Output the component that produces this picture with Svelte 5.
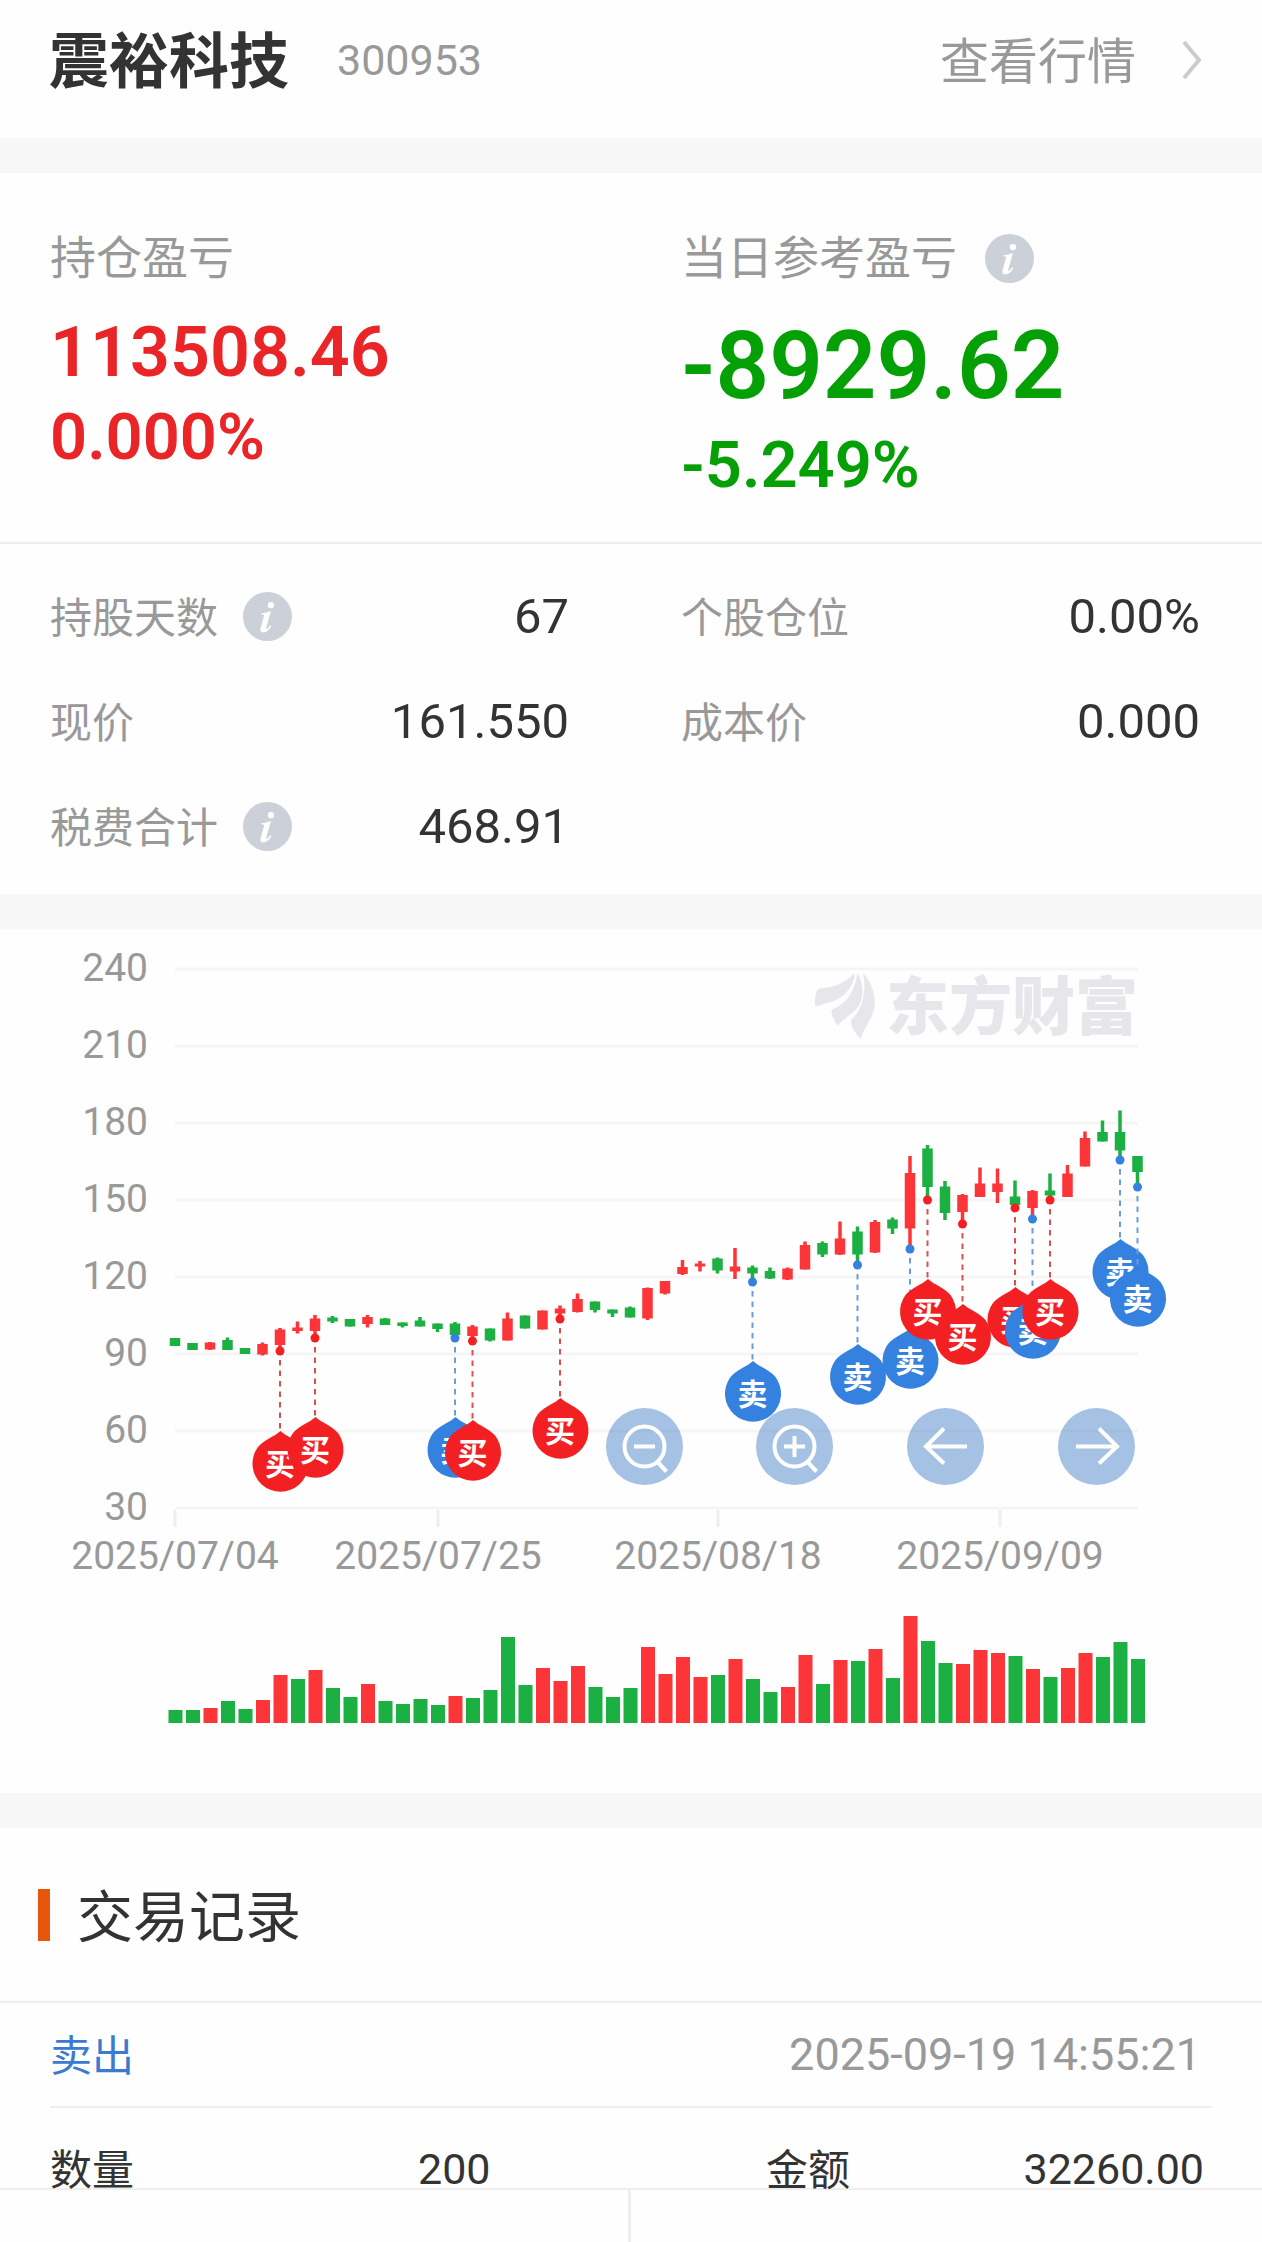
<script>
  // Chart units: the plot spans 240 (top) to 30 (bottom) on the price axis.
  const TOP = 969;
  const STEP = 77;
  const FIRST = 175;
  const PITCH = 17.5;
  const VOLUME_BASE = 1723;

  const prices = [240, 210, 180, 150, 120, 90, 60, 30];
  const dates = [
    { x: 175, label: '2025/07/04' },
    { x: 438, label: '2025/07/25' },
    { x: 718, label: '2025/08/18' },
    { x: 1000, label: '2025/09/09' }
  ];

  // [direction, high, body top, body bottom, low]
  const candles = [
    ['g', 1338, 1338, 1346, 1346], ['g', 1343, 1343, 1350, 1350], ['r', 1342, 1342.5, 1349.5, 1350],
    ['g', 1337.5, 1340, 1350, 1350], ['g', 1348, 1348, 1354, 1354], ['r', 1342.5, 1344, 1354.5, 1355.5],
    ['r', 1328, 1329.5, 1345, 1349], ['r', 1321.5, 1327.5, 1331, 1333.5], ['r', 1315, 1318.5, 1331, 1335],
    ['g', 1316, 1317.5, 1321.5, 1323], ['g', 1319, 1319, 1326.5, 1326.5], ['r', 1315, 1317, 1324, 1327.5],
    ['g', 1318, 1318.5, 1325, 1325], ['g', 1322.5, 1322.5, 1326, 1327.5], ['g', 1317, 1320.5, 1326.5, 1326.5],
    ['g', 1323.5, 1323.5, 1329, 1332], ['g', 1322, 1323.5, 1335, 1338], ['r', 1325, 1326.5, 1336, 1339],
    ['g', 1328.5, 1328.5, 1340.5, 1341.5], ['r', 1312.5, 1318.5, 1340.5, 1340.5], ['g', 1315.5, 1315.5, 1328.5, 1328.5],
    ['r', 1310.5, 1310.5, 1329.5, 1329.5], ['r', 1305.5, 1308.5, 1313.5, 1318], ['r', 1293.5, 1299, 1312, 1312.5],
    ['g', 1301.5, 1301.5, 1310, 1312.5], ['g', 1309.5, 1309.5, 1313.5, 1317], ['g', 1306.5, 1307.5, 1317.5, 1317.5],
    ['r', 1287.5, 1288, 1318.5, 1320], ['r', 1281, 1281, 1293.5, 1294.5], ['r', 1260, 1267, 1274, 1275],
    ['r', 1261, 1263.5, 1266.5, 1271.5], ['g', 1257.5, 1258.5, 1270.5, 1273.5], ['r', 1248, 1266.5, 1271.5, 1279],
    ['g', 1265.5, 1267.5, 1273.5, 1279], ['g', 1267.5, 1271, 1278.5, 1279], ['r', 1267.5, 1268.5, 1279.5, 1280],
    ['r', 1241.5, 1245, 1269.5, 1269.5], ['g', 1241.5, 1243, 1254.5, 1257], ['r', 1221.5, 1238.5, 1254.5, 1255],
    ['g', 1226.5, 1231.5, 1254.5, 1262], ['r', 1220, 1222, 1252.5, 1253], ['g', 1217.5, 1219.5, 1228.5, 1234],
    ['r', 1156, 1173, 1228.5, 1246], ['g', 1145, 1148.5, 1187, 1196], ['g', 1181, 1186.5, 1213, 1220],
    ['r', 1194, 1195, 1212, 1220], ['r', 1167.5, 1183.5, 1197, 1197], ['r', 1168.5, 1183.5, 1192, 1203],
    ['g', 1180.5, 1196.5, 1205, 1206], ['r', 1190, 1191, 1208, 1216], ['g', 1173.5, 1190.5, 1195.5, 1197],
    ['r', 1165, 1173.5, 1197, 1197], ['r', 1131.5, 1138, 1166.5, 1166.5], ['g', 1120.5, 1132, 1141.5, 1141.5],
    ['g', 1110.5, 1132, 1150.5, 1156], ['g', 1156, 1156, 1172, 1183]
  ];

  // Trades: candle index, side, y of the price dot, y of the balloon's centre
  const trades = [
    { i: 6, side: 'buy', dot: 1351, y: 1462 },
    { i: 8, side: 'buy', dot: 1338, y: 1448 },
    { i: 16, side: 'sell', dot: 1338, y: 1448 },
    { i: 17, side: 'buy', dot: 1341, y: 1451 },
    { i: 22, side: 'buy', dot: 1319, y: 1429 },
    { i: 33, side: 'sell', dot: 1282, y: 1392 },
    { i: 39, side: 'sell', dot: 1265, y: 1375 },
    { i: 42, side: 'sell', dot: 1249, y: 1359 },
    { i: 43, side: 'buy', dot: 1200, y: 1310 },
    { i: 45, side: 'buy', dot: 1224, y: 1335 },
    { i: 48, side: 'buy', dot: 1208, y: 1318 },
    { i: 49, side: 'sell', dot: 1219, y: 1329 },
    { i: 50, side: 'buy', dot: 1200, y: 1310 },
    { i: 54, side: 'sell', dot: 1160, y: 1270 },
    { i: 55, side: 'sell', dot: 1187, y: 1297 }
  ];

  const volumes = [
    13, 13, 15, 22, 14, 23, 48, 44, 53, 35, 26, 39, 22, 19, 24, 18, 27, 25, 33, 86, 38, 55, 42, 57, 36, 26, 35, 76,
    49, 66, 46, 48, 64, 44, 31, 36, 68, 39, 63, 62, 74, 45, 107, 82, 60, 59, 73, 70, 67, 54, 46, 55, 70, 66, 81, 64
  ];
  const volumeSides = 'ggrggrrgrggrggggrggggrrrgggrrrrgrggrrgrgrgrggrrrgrgrrggg';

  const x = (i) => FIRST + i * PITCH;
</script>

{#snippet info(name)}
  <button class="info" aria-label={name}>
    <svg viewBox="0 0 50 50" aria-hidden="true">
      <circle cx="25" cy="25" r="25" fill="#ccd0d8" />
      <circle cx="28.500" cy="13.500" r="3.200" fill="#fff" />
      <path d="M19 21.500c3-.2 6-1 9.500-2.200l-4.800 17.200c-.3 1.300.3 1.500 1.200.8 1.200-.9 2.100-2 3-3.300l1.100.7c-2.300 4-5 6.600-8.200 6.600-2.600 0-3.600-1.700-2.900-4.300l3.500-12.400c.3-1.200-.1-1.600-1.300-1.700l-1.300-.1z" fill="#fff" />
    </svg>
  </button>
{/snippet}

<main>
  <header>
    <h1>震裕科技</h1>
    <span class="code">300953</span>
    <a class="quote" href="#quote">
      <span>查看行情</span>
      <svg viewBox="0 0 20 40" aria-hidden="true">
        <path d="M2 2 17 20 2 38" fill="none" stroke="#ccc" stroke-width="4" />
      </svg>
    </a>
  </header>

  <section class="profit split">
    <div class="hold">
      <h2>持仓盈亏</h2>
      <p class="amount">113508.46</p>
      <p class="rate">0.000%</p>
    </div>
    <div class="day">
      <h2>当日参考盈亏 {@render info('当日参考盈亏说明')}</h2>
      <p class="amount">-8929.62</p>
      <p class="rate">-5.249%</p>
    </div>
  </section>

  <dl class="facts split">
    <div><dt><span>持股天数</span> {@render info('持股天数说明')}</dt><dd>67</dd></div>
    <div><dt><span>个股仓位</span></dt><dd>0.00%</dd></div>
    <div><dt><span>现价</span></dt><dd>161.550</dd></div>
    <div><dt><span>成本价</span></dt><dd>0.000</dd></div>
    <div><dt><span>税费合计</span> {@render info('税费合计说明')}</dt><dd>468.91</dd></div>
  </dl>

  <section class="chart" aria-label="K线图">
    <svg class="plot" viewBox="0 929 1262 864">
      {#each prices as price, n}
        <line x1="175" x2="1138" y1={TOP + n * STEP} y2={TOP + n * STEP} stroke="#f5f5f5" stroke-width="3" />
        <text class="axis" x="148" y={TOP + n * STEP + 12} text-anchor="end">{price}</text>
      {/each}
      {#each dates as d}
        <line x1={d.x} x2={d.x} y1="1510" y2="1527" stroke="#eee" stroke-width="3" />
        <text class="axis" x={d.x} y="1569" text-anchor="middle">{d.label}</text>
      {/each}

      <g fill="#e7e6eb">
        <path d="M815.500 1007C814 998 816 989 820 988.500C832 988 846 983 854.500 973C855 984 846 996 834 1001C827 1003.500 821 1004 815.500 1007Z" />
        <path d="M837.500 1025.500C834 1020 831 1015 831.500 1010C848 1003 855 990 857.500 972.500C863 983 865 996 858 1007C853 1014 845 1017 837.500 1025.500Z" />
        <path d="M860.500 1038.500C855 1033 851 1027 851 1020C862 1011 867 992 863 973C871 981 876 995 874.500 1007C872 1020 864 1028 860.500 1038.500Z" />
        <text class="brand" x="886" y="1029">东方财富</text>
      </g>

      {#each candles as [side, high, top, bottom, low], i}
        <g class={side === 'r' ? 'up' : 'down'}>
          <rect x={x(i) - 1.75} y={high} width="3.5" height={low - high} />
          <rect x={x(i) - 5.25} y={top} width="10.5" height={bottom - top} />
        </g>
      {/each}

      {#each trades as t}
        <g class={t.side} transform="translate({x(t.i)} {t.y})">
          <line x1="0" x2="0" y1={t.dot - t.y + 9} y2="-30" stroke-width="2" stroke-dasharray="5.500 5" />
          <circle cy={t.dot - t.y} r="4.500" />
          <path d="M.5-31C7-25 16-23 23-15A28 28 0 1 1-22-15C-15-23-6-25 .5-31Z" />
          <text class="side" y="13" text-anchor="middle">{t.side === 'buy' ? '买' : '卖'}</text>
        </g>
      {/each}

      {#each volumes as v, i}
        <rect class={volumeSides[i] === 'r' ? 'up' : 'down'} x={x(i) - 6.5} y={VOLUME_BASE - v} width="14" height={v} />
      {/each}
    </svg>

    <div class="tools">
      <button aria-label="缩小">
        <svg viewBox="0 0 77 77"><circle cx="38.500" cy="38.500" r="20" /><path d="M28 38.500h21M51.500 54l9 9.500" /></svg>
      </button>
      <button aria-label="放大">
        <svg viewBox="0 0 77 77"><circle cx="38.500" cy="38.500" r="20" /><path d="M28 38.500h21M38.500 28v21M51.500 54l9 9.500" /></svg>
      </button>
      <button aria-label="向左">
        <svg viewBox="0 0 77 77"><path d="M60 38.500H19M37 20.500l-18 18 18 17" /></svg>
      </button>
      <button aria-label="向右">
        <svg viewBox="0 0 77 77"><path d="M18 38.500h41M41 20.500l18 18-18 17" /></svg>
      </button>
    </div>
  </section>

  <section class="records">
    <h2><span>交易记录</span></h2>
    <article>
      <div class="trade">
        <span class="type">卖出</span>
        <time datetime="2025-09-19T14:55:21">2025-09-19 14:55:21</time>
      </div>
      <dl class="detail">
        <dt>数量</dt><dd>200</dd>
        <dt>金额</dt><dd class="end">32260.00</dd>
      </dl>
    </article>
  </section>

  <footer><div></div><div></div></footer>
</main>

<style>
  :global(body) {
    margin: 0;
    background: #fff;
  }
  main {
    font-family: Roboto, 'Noto Sans CJK SC', sans-serif;
    color: #333;
    background: #fefefe;
  }
  h1, h2, p, dl, dd {
    margin: 0;
    font-weight: 400;
  }
  button {
    border: 0;
    padding: 0;
    background: none;
  }
  svg {
    display: block;
  }

  header {
    display: flex;
    align-items: center;
    height: 120px;
    padding: 0 60px 18px 49px;
    border-bottom: 35px solid #f7f7f7;
  }
  h1 {
    padding-top: 6px;
    font-size: 60px;
    line-height: 72px;
    font-weight: 700;
  }
  .code {
    margin-left: 48px;
    font-size: 43px;
    color: #999;
  }
  .quote {
    display: flex;
    align-items: center;
    gap: 46px;
    margin-left: auto;
    font-size: 49px;
    color: #999;
    text-decoration: none;
  }
  .quote span {
    padding-bottom: 6px;
  }
  .quote svg {
    width: 20px;
    height: 40px;
  }

  .split {
    display: grid;
    grid-template-columns: 1fr 1fr;
  }
  .profit {
    padding-top: 57px;
    padding-bottom: 34px;
    border-bottom: 2px solid #eee;
  }
  .profit > div {
    padding-left: 50px;
  }
  .profit h2 {
    display: flex;
    align-items: center;
    gap: 28px;
    font-size: 46px;
    line-height: 56px;
    color: #999;
  }
  .info {
    width: 49px;
    height: 49px;
  }
  .profit p {
    font-weight: 600;
  }
  .hold {
    color: #ea2528;
  }
  .day {
    color: #05a005;
  }
  .amount {
    margin-top: 24px;
  }
  .hold .amount {
    font-size: 70px;
    line-height: 84px;
  }
  .day .amount {
    font-size: 94px;
    line-height: 112px;
  }
  .rate {
    font-size: 65px;
    line-height: 86px;
  }

  .facts {
    padding: 20px 0 15px;
    border-bottom: 35px solid #f7f7f7;
  }
  .facts > div {
    display: flex;
    align-items: center;
    justify-content: space-between;
    height: 105px;
    padding: 0 62px 0 50px;
  }
  .facts dt {
    display: flex;
    align-items: center;
    gap: 25px;
    font-size: 42px;
    color: #999;
  }
  .facts span {
    padding-bottom: 4px;
  }
  .facts dd {
    font-size: 49px;
  }

  .chart {
    position: relative;
    border-bottom: 35px solid #f7f7f7;
  }
  .plot {
    width: 100%;
  }
  .axis {
    font-size: 39px;
    fill: #999;
  }
  .brand {
    font-size: 63px;
    font-weight: 900;
  }
  .up {
    fill: #fb3538;
  }
  .down {
    fill: #1caf41;
  }
  .buy {
    fill: #f22023;
  }
  .sell {
    fill: #3481e0;
  }
  .buy line {
    stroke: #d95050;
  }
  .sell line {
    stroke: #6a9edb;
  }
  .side {
    font-size: 30px;
    font-weight: 700;
    fill: #fff;
  }
  .tools {
    position: absolute;
    top: 55.4%;
    left: 48%;
    right: 10.1%;
    display: flex;
    justify-content: space-between;
  }
  .tools button {
    width: 77px;
    height: 77px;
    border-radius: 50%;
    background: rgb(75 131 199 / 50%);
  }
  .tools svg {
    fill: none;
    stroke: #fff;
    stroke-width: 4;
  }

  .records h2 {
    display: flex;
    align-items: center;
    gap: 27px;
    height: 173px;
    padding-left: 38px;
    border-bottom: 2px solid #eee;
    font-size: 56px;
  }
  .records h2 span {
    padding-bottom: 4px;
  }
  .records h2::before {
    content: '';
    width: 12px;
    height: 52px;
    background: #e8560c;
  }
  article {
    padding: 0 50px;
  }
  .trade {
    display: flex;
    align-items: center;
    justify-content: space-between;
    height: 103px;
    padding-right: 11px;
    border-bottom: 2px solid #eee;
    font-size: 42px;
  }
  .type {
    padding-bottom: 4px;
    color: #3a7bd0;
  }
  time {
    font-size: 45px;
    color: #999;
  }
  .detail {
    display: grid;
    grid-template-columns: 368fr 348fr 150fr 296fr;
    align-items: center;
    box-sizing: border-box;
    height: 80px;
    padding-top: 28px;
  }
  .detail dt {
    padding-bottom: 4px;
    font-size: 42px;
  }
  .detail dd {
    font-size: 43px;
  }
  .detail .end {
    padding-right: 8px;
    text-align: right;
  }
  footer {
    display: grid;
    grid-template-columns: 1fr 1fr;
    height: 53px;
    border-top: 2px solid #eee;
  }
  footer div:first-child {
    border-right: 3px solid #eee;
  }
</style>
